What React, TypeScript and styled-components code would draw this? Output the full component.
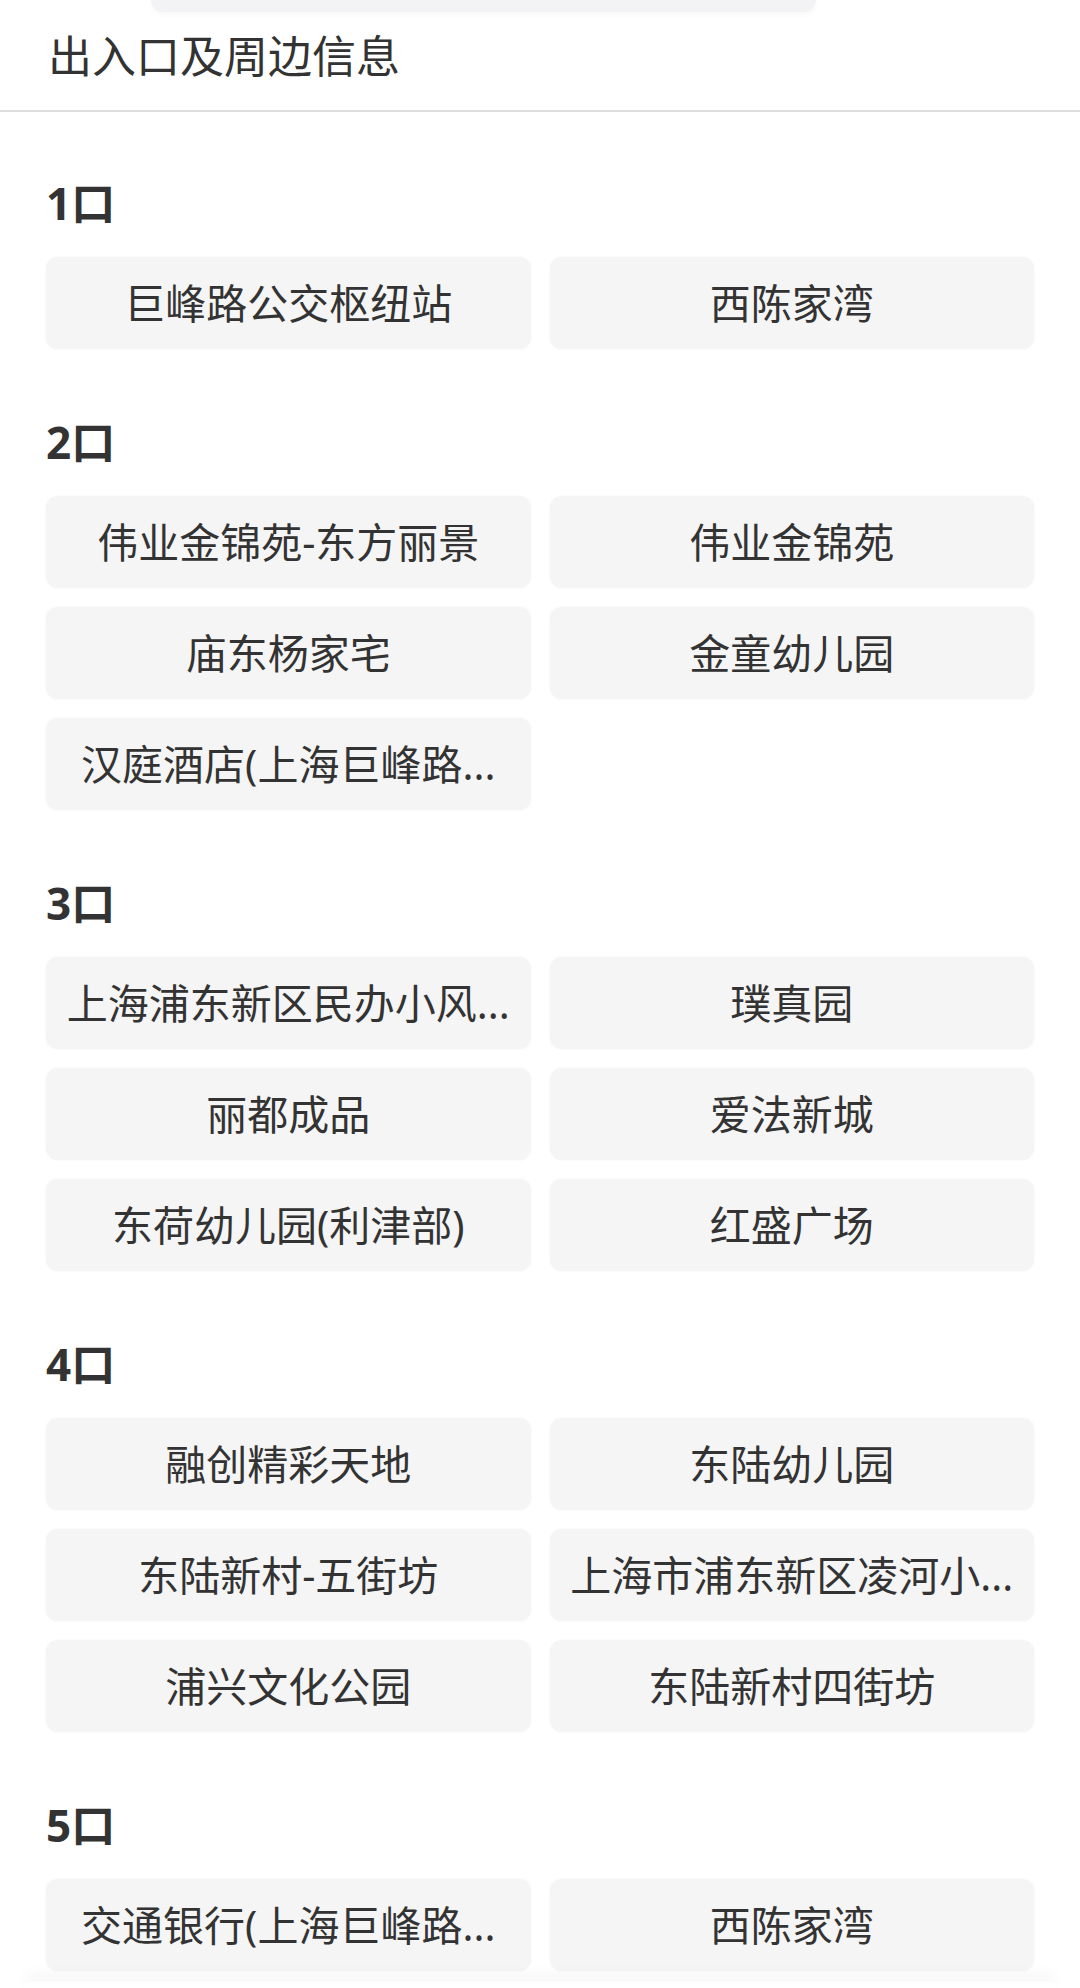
import React from "react";
import styled, { createGlobalStyle } from "styled-components";

const GlobalStyle = createGlobalStyle`
  html, body {
    margin: 0;
    padding: 0;
    background: #ffffff;
  }
  body {
    font-family: "Noto Sans", "Noto Sans CJK SC", sans-serif;
    color: #333333;
    -webkit-font-smoothing: antialiased;
  }
  * {
    box-sizing: border-box;
  }
`;

type Exit = {
  name: string;
  places: string[];
};

const exits: Exit[] = [
  { name: "1口", places: ["巨峰路公交枢纽站", "西陈家湾"] },
  {
    name: "2口",
    places: [
      "伟业金锦苑-东方丽景",
      "伟业金锦苑",
      "庙东杨家宅",
      "金童幼儿园",
      "汉庭酒店(上海巨峰路地铁站店)",
    ],
  },
  {
    name: "3口",
    places: [
      "上海浦东新区民办小风车幼儿园",
      "璞真园",
      "丽都成品",
      "爱法新城",
      "东荷幼儿园(利津部)",
      "红盛广场",
    ],
  },
  {
    name: "4口",
    places: [
      "融创精彩天地",
      "东陆幼儿园",
      "东陆新村-五街坊",
      "上海市浦东新区凌河小学东陆校区",
      "浦兴文化公园",
      "东陆新村四街坊",
    ],
  },
  { name: "5口", places: ["交通银行(上海巨峰路支行)", "西陈家湾"] },
];

// place names longer than ten characters are shortened for the chips
const MAX_NAME_LENGTH = 10;
const shorten = (name: string) =>
  name.length > MAX_NAME_LENGTH ? `${name.slice(0, MAX_NAME_LENGTH)}...` : name;

const Page = styled.div`
  width: 1080px;
  min-height: 1988px;
  background: #ffffff;
`;

/* lower edge of the floating search card above the panel */
const TopStrip = styled.div`
  height: 12px;
  display: flex;
  padding-left: 151px;
`;

const FloatingEdge = styled.div`
  width: 665px;
  height: 12px;
  background: #f3f3f6;
  border-radius: 0 0 28px 28px;
  box-shadow: 0 3px 6px rgba(0, 0, 0, 0.03);
`;

const Header = styled.header`
  padding: 22px 48px 32px;
  border-bottom: 2px solid #dddddd;
`;

const Title = styled.h1`
  margin: 0;
  font-size: 44px;
  line-height: 44px;
  font-weight: 400;
  color: #333333;
`;

const Content = styled.main`
  padding: 66px 46px 40px;
  display: flex;
  flex-direction: column;
  gap: 68px;
`;

const Section = styled.section`
  display: flex;
  flex-direction: column;
`;

const ExitLabel = styled.h2`
  margin: 0 0 29px;
  font-size: 44px;
  line-height: 50px;
  font-weight: 700;
  color: #333333;
`;

const PlaceGrid = styled.div`
  display: grid;
  grid-template-columns: 1fr 1fr;
  column-gap: 19px;
  row-gap: 19px;
`;

const PlaceChip = styled.div`
  height: 92px;
  padding: 0 12px;
  display: flex;
  align-items: center;
  justify-content: center;
  background: #f5f5f5;
  border-radius: 12px;
  box-shadow: 0 0 3px rgba(0, 0, 0, 0.05);
  min-width: 0;
`;

const PlaceName = styled.span`
  font-size: 41px;
  line-height: 48px;
  color: #333333;
  white-space: nowrap;
`;

/* top edge of the bottom sheet floating over the list */
const BottomSheetEdge = styled.div`
  position: fixed;
  left: 24px;
  right: 24px;
  bottom: 0;
  height: 6px;
  background: #ffffff;
  border-radius: 16px 16px 0 0;
  box-shadow: 0 -6px 14px rgba(0, 0, 0, 0.07);
`;

export default function App() {
  return (
    <Page>
      <GlobalStyle />
      <TopStrip>
        <FloatingEdge />
      </TopStrip>
      <Header>
        <Title>出入口及周边信息</Title>
      </Header>
      <Content>
        {exits.map((exit) => (
          <Section key={exit.name}>
            <ExitLabel>{exit.name}</ExitLabel>
            <PlaceGrid>
              {exit.places.map((place, i) => (
                <PlaceChip key={`${exit.name}-${i}`} title={place}>
                  <PlaceName>{shorten(place)}</PlaceName>
                </PlaceChip>
              ))}
            </PlaceGrid>
          </Section>
        ))}
      </Content>
      <BottomSheetEdge />
    </Page>
  );
}
